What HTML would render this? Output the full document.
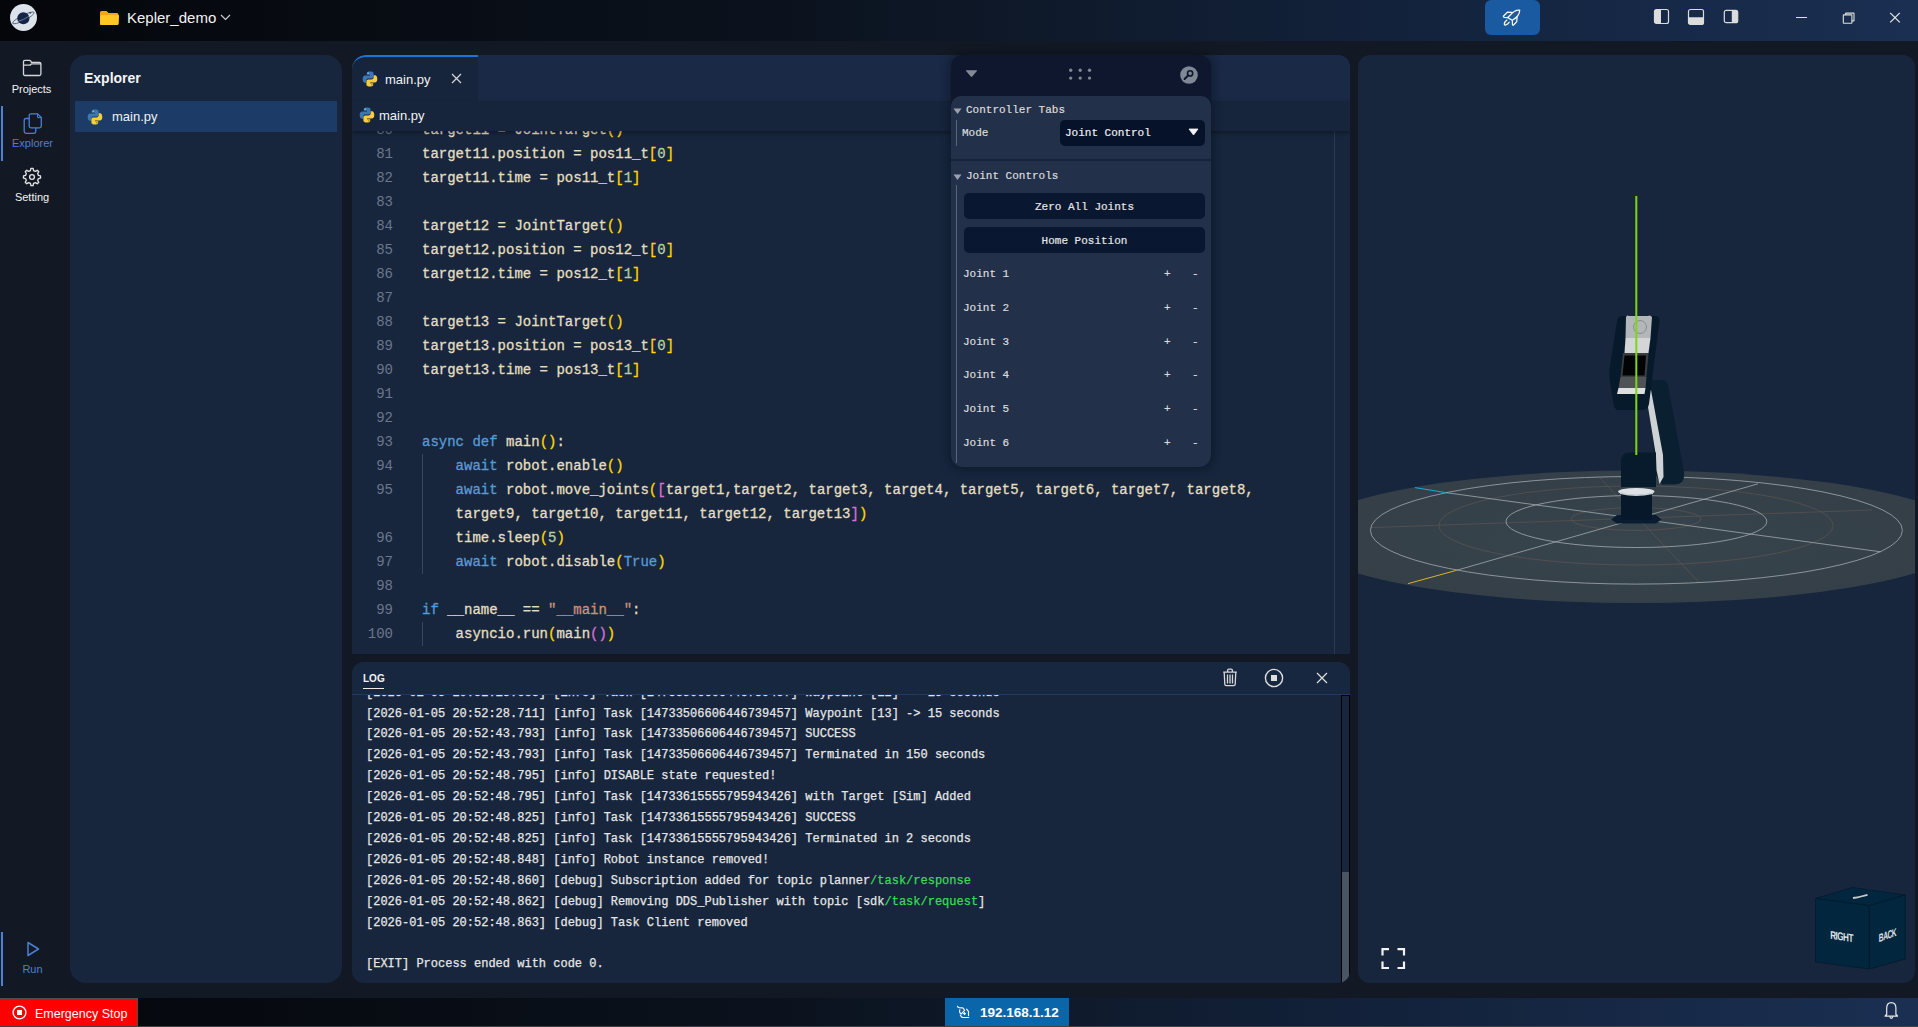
<!DOCTYPE html>
<html><head><meta charset="utf-8">
<style>
*{box-sizing:border-box;margin:0;padding:0}
html,body{width:1918px;height:1027px;overflow:hidden;background:#131924;font-family:"Liberation Sans",sans-serif;color:#fff}
.abs{position:absolute}
#title{position:absolute;left:0;top:0;width:1918px;height:41px;background:linear-gradient(90deg,#04060a 0%,#0b121d 40%,#122139 70%,#1a2f52 100%)}
#status{position:absolute;left:0;top:998px;width:1918px;height:29px;border-bottom:1px solid #3d4340;background:linear-gradient(90deg,#04060a 0%,#0b121d 40%,#122139 70%,#1a2f52 100%)}
.panel{position:absolute;background:#17263d;border-radius:16px}
.ln{position:absolute;left:0;width:41px;text-align:right;font-family:"Liberation Mono",monospace;font-size:14px;line-height:24px;color:#6b778d}
.cl{position:absolute;left:70px;white-space:pre;font-family:"Liberation Mono",monospace;font-size:14px;line-height:24px;-webkit-text-stroke:0.3px currentColor}
.cm{position:absolute;font-family:"Liberation Mono",monospace;font-size:11px;line-height:15px;color:#dcdcdc;white-space:pre;-webkit-text-stroke:0.2px currentColor}
.logtxt{font-family:"Liberation Mono",monospace;font-size:12px;line-height:20.9px;color:#e6e6e6;white-space:pre;-webkit-text-stroke:0.25px currentColor}
.mono{font-family:"Liberation Mono",monospace}
</style></head><body>
<svg width="0" height="0" style="position:absolute">
<defs>
<symbol id="py" viewBox="0 0 16 16">
<path d="M7.9 0.6 C4.6 0.6 4.8 2.1 4.8 2.1 V3.8 H8 V4.4 H3.4 C3.4 4.4 0.7 4.1 0.7 8 C0.7 11.9 3 11.8 3 11.8 H4.3 V9.9 C4.3 9.9 4.2 7.6 6.5 7.6 H9.5 C9.5 7.6 11.6 7.6 11.6 5.6 V2.6 C11.6 2.6 11.9 0.6 7.9 0.6Z" fill="#3b77b0"/>
<circle cx="6.1" cy="2.2" r="0.6" fill="#dde6f0"/>
<path d="M8.1 15.4 C11.4 15.4 11.2 13.9 11.2 13.9 V12.2 H8 V11.6 H12.6 C12.6 11.6 15.3 11.9 15.3 8 C15.3 4.1 13 4.2 13 4.2 H11.7 V6.1 C11.7 6.1 11.8 8.4 9.5 8.4 H6.5 C6.5 8.4 4.4 8.4 4.4 10.4 V13.4 C4.4 13.4 4.1 15.4 8.1 15.4Z" fill="#f7cf35"/>
<circle cx="9.9" cy="13.8" r="0.6" fill="#5a4a10"/>
</symbol>
</defs></svg>

<div id="title">
  <!-- logo -->
  <svg class="abs" style="left:10px;top:4px" width="27" height="27" viewBox="0 0 27 27">
    <circle cx="13.5" cy="13.5" r="13.5" fill="#dde3ea"/>
    <ellipse cx="13.4" cy="13.9" rx="12" ry="2.6" fill="none" stroke="#4a5a74" stroke-width="0.8" transform="rotate(-27 13.4 13.9)"/>
    <circle cx="13.35" cy="14.25" r="6.1" fill="#13264a"/>
    <path d="M7.8 17.6 Q13.5 15.8 19.2 12.2" fill="none" stroke="#8c9ab0" stroke-width="0.7"/>
    <circle cx="20.2" cy="8.8" r="0.9" fill="#2a3a58"/>
  </svg>
  <!-- folder -->
  <svg class="abs" style="left:99px;top:10px" width="21" height="16" viewBox="0 0 21 16">
    <path d="M1 2.5 Q1 1 2.5 1 H7.5 L9.5 3 H18 Q19.5 3 19.5 4.5 V13.5 Q19.5 15 18 15 H2.5 Q1 15 1 13.5Z" fill="#f5a70c"/>
    <path d="M1.5 6 Q2 5 3 5 H19 Q20.5 5 20 6.5 L19.5 13.5 Q19.3 15 18 15 H2.5 Q1 15 1 13.5Z" fill="#ffc624"/>
  </svg>
  <div class="abs" style="left:127px;top:9px;font-size:15px;color:#f2f2f2;line-height:18px">Kepler_demo</div>
  <svg class="abs" style="left:220px;top:14px" width="11" height="7" viewBox="0 0 11 7"><path d="M1 1 L5.5 5.5 L10 1" fill="none" stroke="#cfd3da" stroke-width="1.1"/></svg>

  <div class="abs" style="left:1485px;top:0;width:55px;height:35px;border-radius:6px;background:#1a5aa0"></div>
  <svg class="abs" style="left:1496px;top:4px" width="32" height="28" viewBox="0 0 32 28">
    <path d="M11.7 13.6 C14 11.2 16.5 8.5 18.6 7.2 C20.2 6.2 22 6 23.7 6.1 C23.8 8 23.2 10 21.6 12 C20 14 18 15.2 16.3 16.3 Z" fill="none" stroke="#f2f5fa" stroke-width="1.3" stroke-linejoin="round"/>
    <path d="M16.2 8.3 L11.4 8.2 L7.3 12.2 Q7.4 13.2 8.3 13.3 L11.7 13.6" fill="none" stroke="#f2f5fa" stroke-width="1.3" stroke-linejoin="round"/>
    <path d="M16.3 16.3 L16.5 20.5 Q16.8 21.8 17.7 20.9 L20.7 17.7 L21.1 13" fill="none" stroke="#f2f5fa" stroke-width="1.3" stroke-linejoin="round"/>
    <path d="M10.9 16.1 Q8.6 17.8 8.3 20 Q8.4 21.4 9.7 20.9 Q11.9 20.1 13.1 18.3" fill="none" stroke="#f2f5fa" stroke-width="1.3" stroke-linecap="round"/>
  </svg>
  <svg class="abs" style="left:1653px;top:8px" width="17" height="17" viewBox="0 0 17 17">
    <rect x="1.5" y="1.5" width="14" height="14" rx="2" fill="none" stroke="#dcdcdc" stroke-width="1.2"/>
    <path d="M1.5 3.5 Q1.5 1.5 3.5 1.5 H8 V15.5 H3.5 Q1.5 15.5 1.5 13.5Z" fill="#dcdcdc"/>
  </svg>
  <svg class="abs" style="left:1687px;top:8px" width="18" height="18" viewBox="0 0 18 18">
    <rect x="1.5" y="1.5" width="15" height="15" rx="2" fill="none" stroke="#dcdcdc" stroke-width="1.2"/>
    <path d="M1.5 9.3 H16.5 V14.5 Q16.5 16.5 14.5 16.5 H3.5 Q1.5 16.5 1.5 14.5Z" fill="#dcdcdc"/>
  </svg>
  <svg class="abs" style="left:1723px;top:9px" width="16" height="15" viewBox="0 0 16 15">
    <rect x="1.3" y="1.3" width="13.4" height="12.4" rx="2" fill="none" stroke="#dcdcdc" stroke-width="1.2"/>
    <path d="M8.8 1.3 H12.7 Q14.7 1.3 14.7 3.3 V11.7 Q14.7 13.7 12.7 13.7 H8.8Z" fill="#dcdcdc"/>
  </svg>
  <div class="abs" style="left:1796px;top:17px;width:11px;height:1.2px;background:#e0e0e0"></div>
  <svg class="abs" style="left:1842px;top:12px" width="14" height="13" viewBox="0 0 14 13">
    <rect x="1.3" y="2.9" width="8.6" height="8.3" rx="0.5" fill="none" stroke="#e0e0e0" stroke-width="1.1"/>
    <path d="M3.6 2.9 V1.4 Q3.6 1.1 3.9 1.1 H11.7 Q12 1.1 12 1.4 V8.6 Q12 8.9 11.7 8.9 H9.9" fill="none" stroke="#e0e0e0" stroke-width="1.1"/>
  </svg>
  <svg class="abs" style="left:1889px;top:12px" width="12" height="12" viewBox="0 0 12 12"><path d="M1.2 0.8 L10.8 10.4 M10.8 0.8 L1.2 10.4" stroke="#e8e8e8" stroke-width="1.2"/></svg>
</div>


<!-- activity bar -->
<svg class="abs" style="left:22px;top:59px" width="20" height="18" viewBox="0 0 20 18">
  <path d="M1.5 2.8 Q1.5 1.3 3 1.3 H7.4 Q8.2 1.3 8.7 2 L9.5 3.3 H17.4 Q18.9 3.3 18.9 4.8 V15 Q18.9 16.5 17.4 16.5 H3 Q1.5 16.5 1.5 15 Z M1.5 6.2 H7.5 Q8.3 6.2 8.8 5.5 L9.4 4.8 H18.9" fill="none" stroke="#d4d6da" stroke-width="1.3" stroke-linejoin="round"/>
</svg>
<div class="abs" style="left:0;width:63px;top:83px;text-align:center;font-size:11px;color:#f4f4f4;line-height:13px">Projects</div>
<div class="abs" style="left:1px;top:106px;width:2px;height:55px;background:#4b82d2"></div>
<svg class="abs" style="left:22px;top:112px" width="21" height="23" viewBox="0 0 21 23">
  <path d="M7.5 6.5 H4 Q2.2 6.5 2.2 8.3 V19.5 Q2.2 21.3 4 21.3 H12 Q13.8 21.3 13.8 19.5 V16" fill="none" stroke="#4a7fd0" stroke-width="1.3"/>
  <path d="M9 1.8 H15.5 L19.3 5.6 V14 Q19.3 15.8 17.5 15.8 H9 Q7.2 15.8 7.2 14 V3.6 Q7.2 1.8 9 1.8Z" fill="none" stroke="#4a7fd0" stroke-width="1.3"/>
  <path d="M15.5 1.8 V5.6 H19.3" fill="none" stroke="#4a7fd0" stroke-width="1"/>
</svg>
<div class="abs" style="left:0;width:65px;top:137px;text-align:center;font-size:11px;color:#4a80d2;line-height:13px">Explorer</div>
<svg class="abs" style="left:22px;top:167px" width="20" height="20" viewBox="0 0 20 20">
  <path d="M16.42 8.46 L18.53 8.92 L18.53 11.08 L16.42 11.54 L15.63 13.45 L16.80 15.27 L15.27 16.80 L13.45 15.63 L11.54 16.42 L11.08 18.53 L8.92 18.53 L8.46 16.42 L6.55 15.63 L4.73 16.80 L3.20 15.27 L4.37 13.45 L3.58 11.54 L1.47 11.08 L1.47 8.92 L3.58 8.46 L4.37 6.55 L3.20 4.73 L4.73 3.20 L6.55 4.37 L8.46 3.58 L8.92 1.47 L11.08 1.47 L11.54 3.58 L13.45 4.37 L15.27 3.20 L16.80 4.73 L15.63 6.55Z" fill="none" stroke="#e6e6e6" stroke-width="1.3" stroke-linejoin="round"/>
  <circle cx="10" cy="10" r="2.4" fill="none" stroke="#e6e6e6" stroke-width="1.3"/>
</svg>
<div class="abs" style="left:0;width:64px;top:191px;text-align:center;font-size:11px;color:#f4f4f4;line-height:13px">Setting</div>
<div class="abs" style="left:1px;top:932px;width:2px;height:54px;background:#4b82d2"></div>
<svg class="abs" style="left:24px;top:940px" width="18" height="18" viewBox="0 0 18 18">
  <path d="M4 2.5 L14.5 9 L4 15.5Z" fill="none" stroke="#4a7fd0" stroke-width="1.5" stroke-linejoin="round"/>
</svg>
<div class="abs" style="left:0;width:65px;top:963px;text-align:center;font-size:11px;color:#4a80d2;line-height:13px">Run</div>

<!-- explorer panel -->
<div class="panel" style="left:70px;top:55px;width:272px;height:928px"></div>
<div class="abs" style="left:84px;top:69px;font-size:14px;font-weight:700;color:#f5f5f5;line-height:18px">Explorer</div>
<div class="abs" style="left:75px;top:101px;width:262px;height:31px;background:#1c3c67"></div>
<svg class="abs" style="left:87px;top:109px" width="16" height="16"><use href="#py"/></svg>
<div class="abs" style="left:112px;top:109px;font-size:13px;color:#f0f0f0;line-height:15px">main.py</div>






<!-- editor panel -->
<div class="abs" style="left:352px;top:55px;width:998px;height:599px;background:#17263d;border-radius:14px 12px 0 0;overflow:hidden">
  <div class="abs" style="left:0;top:0;width:998px;height:46px;background:#1a2946"></div>
  <div class="abs" style="left:0;top:0;width:126px;height:46px;background:#17253c;border-top:2px solid #1677d8;border-radius:14px 0 0 0"></div>
  <div class="abs" style="left:982px;top:76px;width:1px;height:523px;background:#2a3850"></div>
  <div class="abs code" style="left:0;top:76px;width:982px;height:523px;overflow:hidden">
    <div class="abs" style="left:70px;top:323px;width:1px;height:120px;background:#3a465c"></div>
    <div class="abs" style="left:70px;top:491px;width:1px;height:24px;background:#3a465c"></div>
    <div class="abs" style="left:0;top:-131px">
<div class="ln" style="top:118px">80</div>
<div class="cl" style="top:118px"><span style="color:#e4dfbe">target11 = JointTarget</span><span style="color:#ffd700">()</span></div>
<div class="ln" style="top:142px">81</div>
<div class="cl" style="top:142px"><span style="color:#e4dfbe">target11.position = pos11_t</span><span style="color:#ffd700">[</span><span style="color:#b5cea8">0</span><span style="color:#ffd700">]</span></div>
<div class="ln" style="top:166px">82</div>
<div class="cl" style="top:166px"><span style="color:#e4dfbe">target11.time = pos11_t</span><span style="color:#ffd700">[</span><span style="color:#b5cea8">1</span><span style="color:#ffd700">]</span></div>
<div class="ln" style="top:190px">83</div>
<div class="cl" style="top:190px"></div>
<div class="ln" style="top:214px">84</div>
<div class="cl" style="top:214px"><span style="color:#e4dfbe">target12 = JointTarget</span><span style="color:#ffd700">()</span></div>
<div class="ln" style="top:238px">85</div>
<div class="cl" style="top:238px"><span style="color:#e4dfbe">target12.position = pos12_t</span><span style="color:#ffd700">[</span><span style="color:#b5cea8">0</span><span style="color:#ffd700">]</span></div>
<div class="ln" style="top:262px">86</div>
<div class="cl" style="top:262px"><span style="color:#e4dfbe">target12.time = pos12_t</span><span style="color:#ffd700">[</span><span style="color:#b5cea8">1</span><span style="color:#ffd700">]</span></div>
<div class="ln" style="top:286px">87</div>
<div class="cl" style="top:286px"></div>
<div class="ln" style="top:310px">88</div>
<div class="cl" style="top:310px"><span style="color:#e4dfbe">target13 = JointTarget</span><span style="color:#ffd700">()</span></div>
<div class="ln" style="top:334px">89</div>
<div class="cl" style="top:334px"><span style="color:#e4dfbe">target13.position = pos13_t</span><span style="color:#ffd700">[</span><span style="color:#b5cea8">0</span><span style="color:#ffd700">]</span></div>
<div class="ln" style="top:358px">90</div>
<div class="cl" style="top:358px"><span style="color:#e4dfbe">target13.time = pos13_t</span><span style="color:#ffd700">[</span><span style="color:#b5cea8">1</span><span style="color:#ffd700">]</span></div>
<div class="ln" style="top:382px">91</div>
<div class="cl" style="top:382px"></div>
<div class="ln" style="top:406px">92</div>
<div class="cl" style="top:406px"></div>
<div class="ln" style="top:430px">93</div>
<div class="cl" style="top:430px"><span style="color:#569cd6">async</span><span style="color:#e4dfbe"> </span><span style="color:#569cd6">def</span><span style="color:#e4dfbe"> main</span><span style="color:#ffd700">()</span><span style="color:#e4dfbe">:</span></div>
<div class="ln" style="top:454px">94</div>
<div class="cl" style="top:454px"><span style="color:#e4dfbe">    </span><span style="color:#569cd6">await</span><span style="color:#e4dfbe"> robot.enable</span><span style="color:#ffd700">()</span></div>
<div class="ln" style="top:478px">95</div>
<div class="cl" style="top:478px"><span style="color:#e4dfbe">    </span><span style="color:#569cd6">await</span><span style="color:#e4dfbe"> robot.move_joints</span><span style="color:#ffd700">(</span><span style="color:#da70d6">[</span><span style="color:#e4dfbe">target1,target2, target3, target4, target5, target6, target7, target8,</span></div>
<div class="cl" style="top:502px"><span style="color:#e4dfbe">    target9, target10, target11, target12, target13</span><span style="color:#da70d6">]</span><span style="color:#ffd700">)</span></div>
<div class="ln" style="top:526px">96</div>
<div class="cl" style="top:526px"><span style="color:#e4dfbe">    time.sleep</span><span style="color:#ffd700">(</span><span style="color:#b5cea8">5</span><span style="color:#ffd700">)</span></div>
<div class="ln" style="top:550px">97</div>
<div class="cl" style="top:550px"><span style="color:#e4dfbe">    </span><span style="color:#569cd6">await</span><span style="color:#e4dfbe"> robot.disable</span><span style="color:#ffd700">(</span><span style="color:#569cd6">True</span><span style="color:#ffd700">)</span></div>
<div class="ln" style="top:574px">98</div>
<div class="cl" style="top:574px"></div>
<div class="ln" style="top:598px">99</div>
<div class="cl" style="top:598px"><span style="color:#569cd6">if</span><span style="color:#e4dfbe"> __name__ == </span><span style="color:#ce9178">&quot;__main__&quot;</span><span style="color:#e4dfbe">:</span></div>
<div class="ln" style="top:622px">100</div>
<div class="cl" style="top:622px"><span style="color:#e4dfbe">    asyncio.run</span><span style="color:#ffd700">(</span><span style="color:#e4dfbe">main</span><span style="color:#da70d6">()</span><span style="color:#ffd700">)</span></div>
    </div>
  </div>
  <div class="abs" style="left:0;top:46px;width:998px;height:30px;background:#16243c;box-shadow:0 2px 4px rgba(0,0,0,0.35)"></div>
</div>
<svg class="abs" style="left:362px;top:71px" width="16" height="16"><use href="#py"/></svg>
<div class="abs" style="left:385px;top:72px;font-size:13px;color:#f2f2f2;line-height:15px">main.py</div>
<svg class="abs" style="left:451px;top:73px" width="11" height="11" viewBox="0 0 11 11"><path d="M1 1 L10 10 M10 1 L1 10" stroke="#d8d8d8" stroke-width="1.2"/></svg>
<svg class="abs" style="left:359px;top:107px" width="16" height="16"><use href="#py"/></svg>
<div class="abs" style="left:379px;top:108px;font-size:13px;color:#f2f2f2;line-height:15px">main.py</div>
<!-- /editor -->

<!-- log panel -->
<div class="abs" style="left:352px;top:662px;width:998px;height:321px;background:#17263d;border-radius:12px 12px 12px 12px;overflow:hidden">
  <div class="abs" style="left:0;top:0;width:998px;height:33px;background:#17273f;border-bottom:1px solid #1f3a5f"></div>
  <div class="abs" style="left:0;top:33px;width:989px;height:288px;overflow:hidden;z-index:0">
    <div class="abs logtxt" style="left:14px;top:-12.40px"><div>[2026-01-05 20:52:13.683] [info] Task [14733506606446739457] Waypoint [12] -&gt; 15 seconds&nbsp;</div><div>[2026-01-05 20:52:28.711] [info] Task [14733506606446739457] Waypoint [13] -&gt; 15 seconds&nbsp;</div><div>[2026-01-05 20:52:43.793] [info] Task [14733506606446739457] SUCCESS&nbsp;</div><div>[2026-01-05 20:52:43.793] [info] Task [14733506606446739457] Terminated in 150 seconds&nbsp;</div><div>[2026-01-05 20:52:48.795] [info] DISABLE state requested!&nbsp;</div><div>[2026-01-05 20:52:48.795] [info] Task [14733615555795943426] with Target [Sim] Added&nbsp;</div><div>[2026-01-05 20:52:48.825] [info] Task [14733615555795943426] SUCCESS&nbsp;</div><div>[2026-01-05 20:52:48.825] [info] Task [14733615555795943426] Terminated in 2 seconds&nbsp;</div><div>[2026-01-05 20:52:48.848] [info] Robot instance removed!&nbsp;</div><div>[2026-01-05 20:52:48.860] [debug] Subscription added for topic planner<span style="color:#39dd55">/task/response</span>&nbsp;</div><div>[2026-01-05 20:52:48.862] [debug] Removing DDS_Publisher with topic [sdk<span style="color:#39dd55">/task/request</span>]&nbsp;</div><div>[2026-01-05 20:52:48.863] [debug] Task Client removed&nbsp;</div><div>&nbsp;</div><div>[EXIT] Process ended with code 0.&nbsp;</div></div>
  </div>
  <div class="abs" style="left:989px;top:33px;width:9px;height:288px;background:#000;"></div>
  <div class="abs" style="left:990px;top:34px;width:7px;height:176px;background:#17263d"></div>
  <div class="abs" style="left:990px;top:210px;width:7px;height:111px;background:#4a5563"></div>
</div>
<div class="abs" style="left:363px;top:672px;font-size:10px;font-weight:700;color:#f2f2f2;line-height:13px">LOG</div>
<div class="abs" style="left:363px;top:687.6px;width:21px;height:1.6px;background:#ececec"></div>
<svg class="abs" style="left:1222px;top:668px" width="16" height="19" viewBox="0 0 16 19">
  <path d="M1.2 4.2 H14.8 M5.6 4 V2.6 Q5.6 1.2 7 1.2 H9 Q10.4 1.2 10.4 2.6 V4 M2.2 4.2 L2.8 16.3 Q2.9 17.7 4.3 17.7 H11.7 Q13.1 17.7 13.2 16.3 L13.8 4.2 M5.5 6.5 V15.5 M8 6.5 V15.5 M10.5 6.5 V15.5" fill="none" stroke="#d8d8d8" stroke-width="1.3"/>
</svg>
<svg class="abs" style="left:1264px;top:668px" width="20" height="20" viewBox="0 0 20 20">
  <circle cx="10" cy="10" r="8.6" fill="none" stroke="#dedede" stroke-width="1.4"/>
  <rect x="7" y="7" width="6" height="6" fill="#dedede"/>
</svg>
<svg class="abs" style="left:1316px;top:672px" width="12" height="12" viewBox="0 0 12 12"><path d="M1 1 L11 11 M11 1 L1 11" stroke="#e0e0e0" stroke-width="1.2"/></svg>
<!-- /log -->
<!-- viewer -->
<div class="abs" style="left:1358px;top:55px;width:557px;height:928px;background:#17263d;border-radius:12px;overflow:hidden">
<svg class="abs" style="left:0;top:0" width="557" height="928" viewBox="1358 55 557 928">
  <defs>
    <radialGradient id="fl" cx="0.5" cy="0.55" r="0.5">
      <stop offset="0" stop-color="#38454d"/>
      <stop offset="1" stop-color="#343f48"/>
    </radialGradient>
  </defs>
  <ellipse cx="1636" cy="536.8" rx="334" ry="66.2" fill="url(#fl)"/>
  <!-- faint circles -->
  <ellipse cx="1636" cy="525.5" rx="197" ry="39.5" fill="none" stroke="#5e554f" stroke-width="0.7"/>
  <ellipse cx="1636" cy="519" rx="65" ry="11.4" fill="none" stroke="#5e554f" stroke-width="0.7"/>
  <path d="M1371 527.6 L1872 510" stroke="#5e554f" stroke-width="0.7"/>
  <path d="M1600 478 L1699.6 583" stroke="#5e554f" stroke-width="0.7"/>
  <!-- main circles -->
  <ellipse cx="1636.4" cy="530.3" rx="266" ry="53.8" fill="none" stroke="#aab0b6" stroke-width="0.75"/>
  <ellipse cx="1636.4" cy="521.5" rx="130.4" ry="26" fill="none" stroke="#aab0b6" stroke-width="0.75"/>
  <path d="M1445.6 492.6 L1880.6 551.8" stroke="#aab0b6" stroke-width="0.75"/>
  <path d="M1455.8 570.5 L1758 483.8" stroke="#aab0b6" stroke-width="0.75"/>
  <path d="M1415 487.6 L1445.6 492.6" stroke="#1ea8e0" stroke-width="1"/>
  <path d="M1408.2 583.6 L1455.8 570.5" stroke="#e2b21e" stroke-width="1"/>
  <!-- robot base -->
  <path d="M1611 519.5 L1617 515 H1656 L1661.5 519.5 L1656 523.4 H1617Z" fill="#0a1d30"/>
  <rect x="1621" y="493" width="31" height="27" rx="1.5" fill="#06182a"/>
  <ellipse cx="1636.3" cy="491.5" rx="18.2" ry="3.6" fill="#dfe2e4"/>
  <path d="M1620 492 Q1636 497 1653 492 V494 Q1636 498 1620 494Z" fill="#c9cdd0"/>
  <!-- lower arm link -->
  <path d="M1648 386 Q1648 380 1654 380 H1662 Q1667 380 1668 385 L1684 472 Q1685.5 484.5 1674 484.5 H1662 L1656 476Z" fill="#0a2030"/>
  <path d="M1645.5 391.5 L1651 390 L1663 455 L1663.5 477 L1659.5 484 L1656.5 470 L1656 456Z" fill="#cfd2d4"/>
  <!-- shoulder -->
  <path d="M1621 487 V461.5 Q1621 452.5 1630 452.5 H1656 V487Z" fill="#071b2c"/>
  <!-- wrist housing -->
  <path d="M1622 316 H1655 Q1660 316 1659.5 321 L1649 404 Q1648 410 1642 410 H1619 Q1614 410 1613.5 404 L1609.5 378 Q1609 372 1610 366 L1617 321 Q1618 316 1622 316Z" fill="#071a2c"/>
  <path d="M1626 317 Q1627 314.5 1629 316 H1648 Q1650 314.5 1652 317 L1650.5 338 H1625.5Z" fill="#b4b7ba"/>
  <circle cx="1640" cy="327" r="6.5" fill="none" stroke="#8a8e92" stroke-width="1"/>
  <path d="M1625.5 338 H1650.5 L1648.5 353 H1624.5Z" fill="#d3d5d7"/>
  <path d="M1623 353 H1648.5 L1646.5 377 H1620.5Z" fill="#3a3d40"/>
  <path d="M1624.5 355.5 H1646 L1644.5 375.5 H1622.5Z" fill="#020304"/>
  <path d="M1620.5 377 H1646.5 L1645.5 388 H1618.5Z" fill="#505356"/>
  <path d="M1618.5 388 H1645.5 L1644.5 394 H1617Z" fill="#dcdee0"/>
  <!-- green axis -->
  <rect x="1635.3" y="196" width="2" height="259" fill="#7ed41b"/>
  <!-- nav cube -->
  <path d="M1815.5 898.5 L1852.4 887.5 L1905.2 895 L1869.4 905.6Z" fill="#03263f" stroke="#021a2c" stroke-width="0.8"/>
  <path d="M1815.5 898.5 L1869.4 905.6 L1869.4 969 L1815.5 962Z" fill="#03263f" stroke="#021a2c" stroke-width="0.8"/>
  <path d="M1869.4 905.6 L1905.2 895 L1905.2 959 L1869.4 969Z" fill="#03263f" stroke="#021a2c" stroke-width="0.8"/>
  <text x="0" y="0" font-family="Liberation Sans" font-weight="700" font-size="12" fill="#dfe2e6" text-anchor="middle" transform="matrix(0.68 0.1 0 0.95 1841.5 940.5)" letter-spacing="-0.8">RIGHT</text>
  <text x="0" y="0" font-family="Liberation Sans" font-weight="700" font-size="12" fill="#dfe2e6" text-anchor="middle" transform="matrix(0.55 -0.2 0 0.95 1887.5 939)" letter-spacing="-0.8">BACK</text>
  <path d="M1853 898 Q1858 897.5 1861 896.5 L1867.5 894.8" stroke="#c8cacc" stroke-width="1.8"/>
  <!-- fullscreen -->
  <path d="M1382.5 955.5 V949.2 H1389 M1397.5 949.2 H1404 V955.5 M1404 961.5 V968 H1397.5 M1389 968 H1382.5 V961.5" fill="none" stroke="#f2f2f2" stroke-width="2.2"/>
</svg>
</div>
<!-- /viewer -->
<!-- controller -->
<div class="abs" style="left:951px;top:55px;width:260px;height:412px;border-radius:12px;background:#0e172e;box-shadow:0 0 10px 2px rgba(5,10,20,0.45)"></div>
<div class="abs" style="left:951px;top:96px;width:260px;height:371px;border-radius:10px 10px 12px 12px;background:#22304a"></div>
<div class="abs" style="left:951px;top:159px;width:260px;height:2px;background:#18233a"></div>
<svg class="abs" style="left:965px;top:69px" width="13" height="9" viewBox="0 0 13 9"><path d="M1.5 1.2 H11.5 Q12.4 1.2 11.9 2 L7.2 7.6 Q6.5 8.3 5.8 7.6 L1.1 2 Q0.6 1.2 1.5 1.2Z" fill="#858b96"/></svg>
<svg class="abs" style="left:1068px;top:68px" width="24" height="13" viewBox="0 0 24 13">
 <circle cx="2.7" cy="2.2" r="1.7" fill="#7f8692"/><circle cx="12.2" cy="2.2" r="1.7" fill="#7f8692"/><circle cx="21.5" cy="2.2" r="1.7" fill="#7f8692"/>
 <circle cx="2.7" cy="10.1" r="1.7" fill="#7f8692"/><circle cx="12.2" cy="10.1" r="1.7" fill="#7f8692"/><circle cx="21.5" cy="10.1" r="1.7" fill="#7f8692"/>
</svg>
<svg class="abs" style="left:1180px;top:66px" width="18" height="18" viewBox="0 0 18 18">
 <circle cx="9" cy="9" r="8.8" fill="#7f8894"/>
 <circle cx="10.1" cy="7.4" r="2.6" fill="none" stroke="#0e172e" stroke-width="1.6"/>
 <path d="M8.3 9.3 L4.6 13" stroke="#0e172e" stroke-width="2" stroke-linecap="round"/>
</svg>
<svg class="abs" style="left:953px;top:108px" width="9" height="7" viewBox="0 0 9 7"><path d="M0.5 0.5 H8.5 L4.5 6Z" fill="#9aa1ad"/></svg>
<div class="abs cm" style="left:966px;top:103px">Controller Tabs</div>
<div class="abs" style="left:956px;top:120px;width:1px;height:26px;background:#5a6579"></div>
<div class="abs cm" style="left:962px;top:126px">Mode</div>
<div class="abs" style="left:1060px;top:120px;width:145px;height:26px;border-radius:5px;background:#06112a"></div>
<div class="abs cm" style="left:1065px;top:126px;color:#eeeeee">Joint Control</div>
<svg class="abs" style="left:1188px;top:128px" width="11" height="8" viewBox="0 0 11 8"><path d="M1 1 H10 L5.5 7Z" fill="#f4f4f4" stroke="#f4f4f4" stroke-width="0.8" stroke-linejoin="round"/></svg>
<svg class="abs" style="left:953px;top:174px" width="9" height="7" viewBox="0 0 9 7"><path d="M0.5 0.5 H8.5 L4.5 6Z" fill="#9aa1ad"/></svg>
<div class="abs cm" style="left:966px;top:169px">Joint Controls</div>
<div class="abs" style="left:956px;top:185px;width:1px;height:278px;background:#5a6579"></div>
<div class="abs" style="left:964px;top:193px;width:241px;height:26px;border-radius:5px;background:#0a1730"></div>
<div class="abs cm" style="left:964px;width:241px;text-align:center;top:200px;color:#e6e6e6">Zero All Joints</div>
<div class="abs" style="left:964px;top:227px;width:241px;height:26px;border-radius:5px;background:#0a1730"></div>
<div class="abs cm" style="left:964px;width:241px;text-align:center;top:234px;color:#e6e6e6">Home Position</div>
<div class="abs cm" style="left:963px;top:267px">Joint 1</div>
<div class="abs cm" style="left:1164px;top:267px">+</div>
<div class="abs cm" style="left:1192px;top:267px">-</div>
<div class="abs cm" style="left:963px;top:300.8px">Joint 2</div>
<div class="abs cm" style="left:1164px;top:300.8px">+</div>
<div class="abs cm" style="left:1192px;top:300.8px">-</div>
<div class="abs cm" style="left:963px;top:334.6px">Joint 3</div>
<div class="abs cm" style="left:1164px;top:334.6px">+</div>
<div class="abs cm" style="left:1192px;top:334.6px">-</div>
<div class="abs cm" style="left:963px;top:368.4px">Joint 4</div>
<div class="abs cm" style="left:1164px;top:368.4px">+</div>
<div class="abs cm" style="left:1192px;top:368.4px">-</div>
<div class="abs cm" style="left:963px;top:402.2px">Joint 5</div>
<div class="abs cm" style="left:1164px;top:402.2px">+</div>
<div class="abs cm" style="left:1192px;top:402.2px">-</div>
<div class="abs cm" style="left:963px;top:436px">Joint 6</div>
<div class="abs cm" style="left:1164px;top:436px">+</div>
<div class="abs cm" style="left:1192px;top:436px">-</div>


<div id="status">
  <div class="abs" style="left:0;top:0;width:138px;height:28px;background:#ff0000;border-top:1px solid #4a4f50;border-right:1px solid #4a4f50"></div>
  <svg class="abs" style="left:12px;top:7px" width="15" height="15" viewBox="0 0 15 15">
    <circle cx="7.5" cy="7.5" r="6.4" fill="none" stroke="#fff" stroke-width="1.4"/>
    <rect x="5" y="5" width="5" height="5" fill="#fff"/>
  </svg>
  <div class="abs" style="left:35px;top:9px;font-size:12.5px;color:#fff;line-height:15px">Emergency Stop</div>
  <div class="abs" style="left:945px;top:0;width:124px;height:28px;background:#0b66a9"></div>
  <svg class="abs" style="left:952px;top:4px" width="22" height="20" viewBox="0 0 22 20">
    <path d="M5.4 4.3 Q6 5.6 7.2 5.7 L10.5 5.8 Q11.6 6.3 12.6 8.4 L9.1 12.1 Q7.4 10.8 7.6 9 L7.8 7.8 M14.6 7.2 L16.3 9.2 Q16.5 9.6 16.5 10 V13.6 M8.4 13.4 L9.8 15 Q10.3 15.5 11 15.5 H16.7 M12.5 10.6 V12.6 M11.5 11.6 H13.5" fill="none" stroke="#f4f7fb" stroke-width="1.2" stroke-linecap="round" stroke-linejoin="round"/>
  </svg>
  <div class="abs" style="left:980px;top:7px;font-size:13.5px;font-weight:700;color:#fff;line-height:16px">192.168.1.12</div>
  <svg class="abs" style="left:1883px;top:3px" width="17" height="19" viewBox="0 0 17 19">
    <path d="M3.7 13.6 V7 Q3.7 1.6 8.3 1.6 Q12.9 1.6 12.9 7 V13.6 Q14.4 14 14.5 15.2 H2.1 Q2.2 14 3.7 13.6Z" fill="none" stroke="#e8e8e8" stroke-width="1.2" stroke-linejoin="round"/>
    <path d="M6.9 15.4 Q7 17.3 8.3 17.3 Q9.6 17.3 9.7 15.4" fill="none" stroke="#e8e8e8" stroke-width="1.2"/>
  </svg>
</div>
</body></html>
